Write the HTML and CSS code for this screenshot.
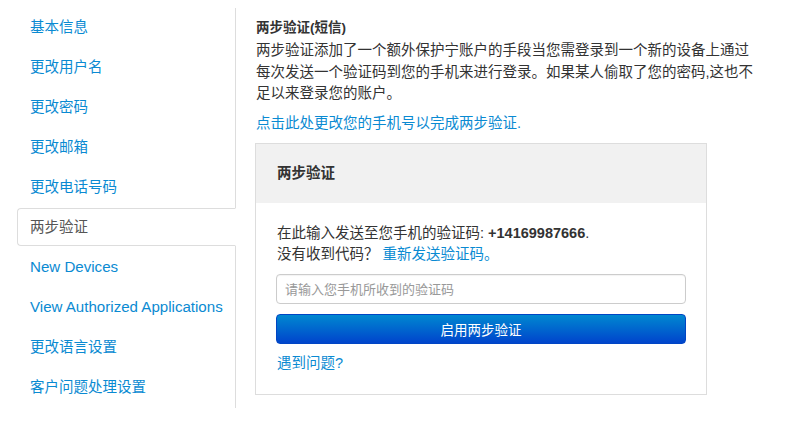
FILE: index.html
```html
<!DOCTYPE html>
<html lang="zh-CN">
<head>
<meta charset="utf-8">
<title>两步验证</title>
<link rel="stylesheet" href="styles.css">
</head>
<body>
<div class="page">
  <ul class="sidenav">
    <li><a href="#">基本信息</a></li>
    <li><a href="#">更改用户名</a></li>
    <li><a href="#">更改密码</a></li>
    <li><a href="#">更改邮箱</a></li>
    <li><a href="#">更改电话号码</a></li>
    <li class="active"><a href="#">两步验证</a></li>
    <li><a href="#" class="en">New Devices</a></li>
    <li><a href="#" class="en">View Authorized Applications</a></li>
    <li><a href="#">更改语言设置</a></li>
    <li><a href="#">客户问题处理设置</a></li>
  </ul>
  <main class="main">
    <h4 class="title">两步验证(短信)</h4>
    <p class="desc">两步验证添加了一个额外保护宁账户的手段当您需登录到一个新的设备上通过每次发送一个验证码到您的手机来进行登录。如果某人偷取了您的密码,这也不足以来登录您的账户。</p>
    <p class="change"><a href="#">点击此处更改您的手机号以完成两步验证.</a></p>
    <section class="card">
      <div class="card-head">两步验证</div>
      <div class="card-body">
        <p class="info">在此输入发送至您手机的验证码: <strong>+14169987666</strong>.<br>没有收到代码？ <a href="#">重新发送验证码。</a></p>
        <input class="code" type="text" placeholder="请输入您手机所收到的验证码">
        <button class="btn" type="button">启用两步验证</button>
        <p class="help"><a href="#">遇到问题?</a></p>
      </div>
    </section>
  </main>
</div>
</body>
</html>
```
FILE: styles.css
```css
html, body {
  margin: 0;
  padding: 0;
  background: #fff;
}
body {
  font-family: "Liberation Sans", "Noto Sans CJK SC", sans-serif;
  font-size: 14.5px;
  color: #333;
}
a {
  color: #0a8ad2;
  text-decoration: none;
}
.page {
  display: flex;
  align-items: flex-start;
  padding: 8px 0 0 17px;
}
.sidenav {
  list-style: none;
  margin: 0;
  padding: 0;
  width: 218px;
  border-right: 1px solid #ddd;
  flex: none;
}
.sidenav li {
  height: 40px;
}
.sidenav a {
  display: block;
  box-sizing: border-box;
  height: 38px;
  line-height: 36px;
  padding: 0 12px;
  border: 1px solid transparent;
  margin-right: -1px;
  color: #0a8ad2;
}
.sidenav a.en {
  font-size: 15.1px;
}
.sidenav .active a {
  color: #555;
  border-color: #ddd;
  border-right-color: #fff;
  background: #fff;
  border-radius: 4px 0 0 4px;
  position: relative;
}
.main {
  margin-left: 20px;
  width: 500px;
}
.title {
  margin: 10px 0 0;
  font-size: 13.5px;
  line-height: 20px;
  font-weight: bold;
  color: #333;
}
.desc {
  margin: 2px 0 0;
  line-height: 21.5px;
}
.change {
  margin: 8px 0 0;
  line-height: 21.5px;
}
.card {
  margin: 9px 0 0 -1px;
  width: 450px;
  border: 1px solid #ddd;
}
.card-head {
  height: 59px;
  line-height: 59px;
  padding: 0 21px;
  background: #f1f1f1;
  font-weight: bold;
  color: #333;
}
.card-body {
  padding: 20px;
}
.info,
.help {
  padding-left: 1px;
}
.info {
  margin: 0;
  line-height: 21px;
}
.code {
  display: block;
  box-sizing: border-box;
  width: 410px;
  height: 30px;
  margin-top: 9px;
  padding: 0 8px;
  border: 1px solid #ccc;
  border-radius: 4px;
  font-family: inherit;
  font-size: 13px;
  color: #555;
  box-shadow: inset 0 1px 1px rgba(0,0,0,0.05);
}
.code::placeholder {
  color: #999;
}
.btn {
  display: block;
  box-sizing: border-box;
  width: 410px;
  height: 30px;
  margin-top: 10px;
  border: 1px solid #0045c4;
  border-radius: 4px;
  background: linear-gradient(to bottom, #0088d0, #0044cc);
  color: #fff;
  font-family: inherit;
  font-size: 13.5px;
  cursor: pointer;
}
.help {
  margin: 9px 0 0;
  line-height: 21px;
}
```
